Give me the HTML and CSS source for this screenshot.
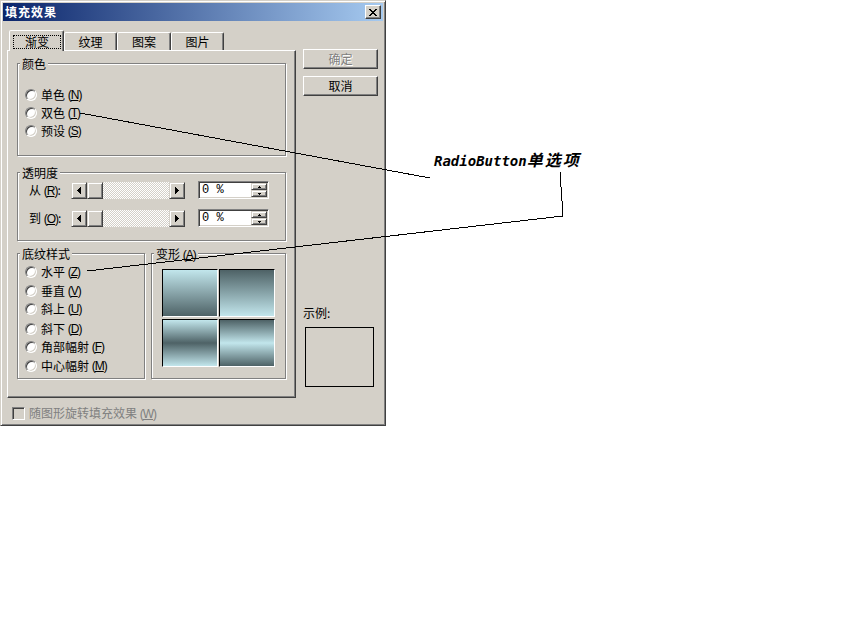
FILE: index.html
```html
<!DOCTYPE html>
<html lang="zh-CN">
<head>
<meta charset="utf-8">
<title>填充效果</title>
<link rel="stylesheet" href="styles.css">
</head>
<body>
<div class="dialog">
  <div class="titlebar">
    <span class="title">填充效果</span>
    <span class="close"><svg width="8" height="7" viewBox="0 0 8 7" shape-rendering="crispEdges"><path d="M0 0h2v1h-2zM6 0h2v1h-2zM1 1h2v1h-2zM5 1h2v1h-2zM2 2h4v1h-4zM3 3h2v1h-2zM2 4h4v1h-4zM1 5h2v1h-2zM5 5h2v1h-2zM0 6h2v1h-2zM6 6h2v1h-2z"/></svg></span>
  </div>
  <div class="main">
    <div class="leftcol">
      <div class="tabs">
        <div class="tab sel"><span class="focus">渐变</span></div>
        <div class="tab w53">纹理</div>
        <div class="tab w54">图案</div>
        <div class="tab w53">图片</div>
      </div>
      <div class="panel">
        <div class="group g-color">
          <div class="glabel">颜色</div>
          <div class="radios r-color">
            <div class="opt"><span class="radio"></span>单色 <span class="mn">(<u>N</u>)</span></div>
            <div class="opt"><span class="radio"></span>双色 <span class="mn">(<u>T</u>)</span></div>
            <div class="opt"><span class="radio"></span>预设 <span class="mn">(<u>S</u>)</span></div>
          </div>
        </div>
        <div class="group g-trans">
          <div class="glabel">透明度</div>
          <div class="trans-body">
            <div class="trow">
              <span class="tlabel">从 <span class="mn">(<u>R</u>)</span>:</span>
              <div class="scroll">
                <span class="sbtn"><svg width="4" height="7" shape-rendering="crispEdges"><path d="M0 3h1v1h-1zM1 2h1v3h-1zM2 1h1v5h-1zM3 0h1v7h-1z"/></svg></span>
                <span class="thumb"></span>
                <span class="track"></span>
                <span class="sbtn"><svg width="4" height="7" shape-rendering="crispEdges"><path d="M0 0h1v7h-1zM1 1h1v5h-1zM2 2h1v3h-1zM3 3h1v1h-1z"/></svg></span>
              </div>
              <div class="spin">
                <span class="val">0 %</span>
                <span class="spinbtns">
                  <span class="sb"><svg width="3" height="2" shape-rendering="crispEdges"><path d="M1 0h1v1h-1zM0 1h3v1h-3z"/></svg></span>
                  <span class="sb"><svg width="3" height="2" shape-rendering="crispEdges"><path d="M0 0h3v1h-3zM1 1h1v1h-1z"/></svg></span>
                </span>
              </div>
            </div>
            <div class="trow second">
              <span class="tlabel">到 <span class="mn">(<u>O</u>)</span>:</span>
              <div class="scroll">
                <span class="sbtn"><svg width="4" height="7" shape-rendering="crispEdges"><path d="M0 3h1v1h-1zM1 2h1v3h-1zM2 1h1v5h-1zM3 0h1v7h-1z"/></svg></span>
                <span class="thumb"></span>
                <span class="track"></span>
                <span class="sbtn"><svg width="4" height="7" shape-rendering="crispEdges"><path d="M0 0h1v7h-1zM1 1h1v5h-1zM2 2h1v3h-1zM3 3h1v1h-1z"/></svg></span>
              </div>
              <div class="spin">
                <span class="val">0 %</span>
                <span class="spinbtns">
                  <span class="sb"><svg width="3" height="2" shape-rendering="crispEdges"><path d="M1 0h1v1h-1zM0 1h3v1h-3z"/></svg></span>
                  <span class="sb"><svg width="3" height="2" shape-rendering="crispEdges"><path d="M0 0h3v1h-3zM1 1h1v1h-1z"/></svg></span>
                </span>
              </div>
            </div>
          </div>
        </div>
        <div class="lower">
          <div class="group g-style">
            <div class="glabel">底纹样式</div>
            <div class="radios r-style">
              <div class="opt"><span class="radio"></span>水平 <span class="mn">(<u>Z</u>)</span></div>
              <div class="opt m1"><span class="radio"></span>垂直 <span class="mn">(<u>V</u>)</span></div>
              <div class="opt"><span class="radio"></span>斜上 <span class="mn">(<u>U</u>)</span></div>
              <div class="opt m2"><span class="radio"></span>斜下 <span class="mn">(<u>D</u>)</span></div>
              <div class="opt"><span class="radio"></span>角部幅射 <span class="mn">(<u>F</u>)</span></div>
              <div class="opt m1"><span class="radio"></span>中心幅射 <span class="mn">(<u>M</u>)</span></div>
            </div>
          </div>
          <div class="group g-var">
            <div class="glabel">变形 <span class="mn">(<u>A</u>)</span></div>
            <div class="tiles">
              <span class="tile t1"></span>
              <span class="tile t2"></span>
              <span class="tile t3"></span>
              <span class="tile t4"></span>
            </div>
          </div>
        </div>
      </div>
    </div>
    <div class="rightcol">
      <div class="btn disabled">确定</div>
      <div class="btn">取消</div>
      <div class="sample-label">示例:</div>
      <div class="sample"></div>
    </div>
  </div>
  <div class="footer"><span class="check"></span><span class="ftext">随图形旋转填充效果 <span class="mn">(<u>W</u>)</span></span></div>
</div>
<svg class="annot-lines" width="844" height="624" viewBox="0 0 844 624" shape-rendering="crispEdges">
  <line x1="80" y1="113" x2="430" y2="178" stroke="#000" stroke-width="1"/>
  <polyline points="87,271 563,216 560,172" fill="none" stroke="#000" stroke-width="1"/>
</svg>
<div class="annot"><span class="lat">RadioButton</span><span class="cjk">单选项</span></div>
</body>
</html>
```
FILE: styles.css
```css
* { box-sizing: border-box; }
html, body { margin: 0; padding: 0; background: #fff; }
body {
  width: 844px; height: 624px; position: relative; overflow: hidden;
  font-family: "Noto Sans CJK SC", "Noto Sans", sans-serif;
  font-size: 12px; line-height: 12px; color: #000;
}
.dialog {
  width: 386px; height: 426px; background: #d4d0c8;
  border: 1px solid; border-color: #d4d0c8 #404040 #404040 #d4d0c8;
  box-shadow: inset 1px 1px #fff, inset -1px -1px #808080;
  padding: 2px; display: flex; flex-direction: column;
}
.titlebar {
  height: 18px; flex: none;
  background: linear-gradient(to right, #0a246a, #a6caf0);
  display: flex; align-items: center; justify-content: space-between;
  padding: 0 2px;
}
.title { color: #fff; font-weight: bold; letter-spacing: 1px; }
.close {
  width: 16px; height: 14px; background: #d4d0c8;
  border: 1px solid; border-color: #fff #404040 #404040 #fff;
  box-shadow: inset -1px -1px #808080;
  display: flex; align-items: center; justify-content: center;
}
.close svg { display: block; margin-left: -1px; }

.main { display: flex; padding: 9px 0 0 4px; flex: none; }
.leftcol { width: 289px; flex: none; }
.tabs { display: flex; align-items: flex-end; height: 20px; padding-left: 2px; }
.tab {
  position: relative; height: 18px; background: #d4d0c8;
  border: 1px solid; border-bottom: 0; border-color: #fff #404040 transparent #fff;
  box-shadow: inset -1px 0 #808080; border-radius: 2px 2px 0 0;
  display: flex; justify-content: center; align-items: center;
}
.w53 { width: 53px; }
.w54 { width: 54px; }
.tab.sel { width: 55px; height: 21px; margin-bottom: -1px; z-index: 2; align-items: flex-start; justify-content: flex-start; }
.focus {
  margin: 4px 0 0 3px; width: 48px; height: 14px; border: 1px dotted #000;
  display: flex; align-items: center; justify-content: center;
}
.panel {
  height: 348px; background: #d4d0c8;
  border: 1px solid; border-color: #fff #404040 #404040 #fff;
  box-shadow: inset -1px -1px #808080;
  padding: 12px 0 0 9px;
}
.group {
  border: 1px solid #808080;
  box-shadow: inset 1px 1px #fff, 1px 1px #fff;
}
.glabel {
  width: fit-content; margin: -6px 0 0 2px; padding: 0 2px;
  height: 12px; line-height: 12px; background: #d4d0c8; white-space: pre;
}
.mn { font-family: "Liberation Sans", sans-serif; font-size: 12px; letter-spacing: -1px; }
.mn u { text-decoration-thickness: 1px; text-underline-offset: 1px; }

.g-color { width: 269px; height: 93px; }
.radios { display: flex; flex-direction: column; }
.r-color { padding-top: 16px; }
.opt { display: flex; align-items: center; height: 18px; white-space: pre; }
.radio {
  width: 12px; height: 12px; border-radius: 50%; background: #fff;
  border: 1px solid; border-color: #808080 #fff #fff #808080;
  box-shadow: inset 1px 1px #404040, inset -1px -1px #d4d0c8;
  margin: 0 4px 0 7px; flex: none;
}

.g-trans { width: 269px; height: 69px; margin-top: 16px; }
.trans-body { padding: 2px 0 0 11px; }
.trow { display: flex; align-items: center; height: 18px; }
.trow.second { margin-top: 10px; }
.tlabel { width: 42px; white-space: pre; }
.scroll { width: 114px; height: 17px; display: flex; }
.sbtn, .thumb {
  width: 16px; height: 17px; flex: none; background: #d4d0c8;
  border: 1px solid; border-color: #d4d0c8 #404040 #404040 #d4d0c8;
  box-shadow: inset 1px 1px #fff, inset -1px -1px #808080;
  display: flex; align-items: center; justify-content: center;
}
.sbtn svg { display: block; }
.track {
  flex: 1;
  background: repeating-conic-gradient(#fff 0 25%, #d4d0c8 0 50%) 0 0 / 2px 2px;
}
.spin {
  margin-left: 13px; width: 71px; height: 18px; background: #fff;
  border: 1px solid; border-color: #808080 #fff #fff #808080;
  box-shadow: inset 1px 1px #404040, inset -1px -1px #d4d0c8;
  display: flex; align-items: center; justify-content: space-between;
  padding: 1px 1px 1px 3px;
}
.val { font-family: "Liberation Mono", monospace; font-size: 12px; white-space: pre; }
.spinbtns { display: flex; flex-direction: column; width: 16px; height: 14px; }
.sb {
  height: 7px; background: #d4d0c8;
  border: 1px solid; border-color: #d4d0c8 #404040 #404040 #d4d0c8;
  box-shadow: inset 1px 1px #fff, inset -1px -1px #808080;
  display: flex; align-items: center; justify-content: center;
}
.sb svg { display: block; }

.lower { display: flex; margin-top: 12px; }
.g-style { width: 128px; height: 126px; }
.r-style { padding-top: 3px; }
.opt.m1 { margin-top: 1px; }
.opt.m2 { margin-top: 2px; }
.g-var { width: 135px; height: 126px; margin-left: 6px; }
.tiles {
  padding: 9px 0 0 10px;
  display: grid; grid-template-columns: 56px 56px; grid-template-rows: 48px 48px;
  column-gap: 1px; row-gap: 2px;
}
.tile { border: 1px solid; border-color: #000 #fff #fff #000; }
.t1 { background: linear-gradient(#c2e6ec, #4e6266); }
.t2 { background: linear-gradient(#4e6266, #c2e6ec); }
.t3 { background: linear-gradient(#c2e6ec, #4e6266 50%, #c2e6ec); }
.t4 { background: linear-gradient(#4e6266, #c2e6ec 50%, #4e6266); }

.rightcol { margin-left: 7px; padding-top: 19px; width: 75px; flex: none; }
.btn {
  height: 20px; width: 75px; background: #d4d0c8;
  border: 1px solid; border-color: #fff #404040 #404040 #fff;
  box-shadow: inset -1px -1px #808080;
  display: flex; align-items: center; justify-content: center;
}
.btn + .btn { margin-top: 7px; }
.btn.disabled { color: #808080; text-shadow: 1px 1px #fff; }
.sample-label { margin-top: 211px; height: 12px; }
.sample { margin: 8px 0 0 2px; width: 69px; height: 60px; border: 1px solid #000; }

.footer {
  display: flex; align-items: center; height: 13px;
  margin-top: 9px; padding-left: 9px; color: #808080;
}
.check {
  width: 13px; height: 13px; background: #d4d0c8; flex: none;
  border: 1px solid; border-color: #808080 #fff #fff #808080;
  box-shadow: inset 1px 1px #404040, inset -1px -1px #d4d0c8;
  margin-right: 4px;
}
.ftext { white-space: pre; }

.annot-lines { position: absolute; left: 0; top: 0; pointer-events: none; }
.annot {
  position: absolute; left: 434px; top: 151px;
  font-weight: bold; font-style: italic; font-size: 16px; line-height: 16px;
  white-space: nowrap;
}
.annot .lat { font-family: "DejaVu Sans Mono", monospace; font-size: 14px; }
.annot .cjk { letter-spacing: 2px; }
```
